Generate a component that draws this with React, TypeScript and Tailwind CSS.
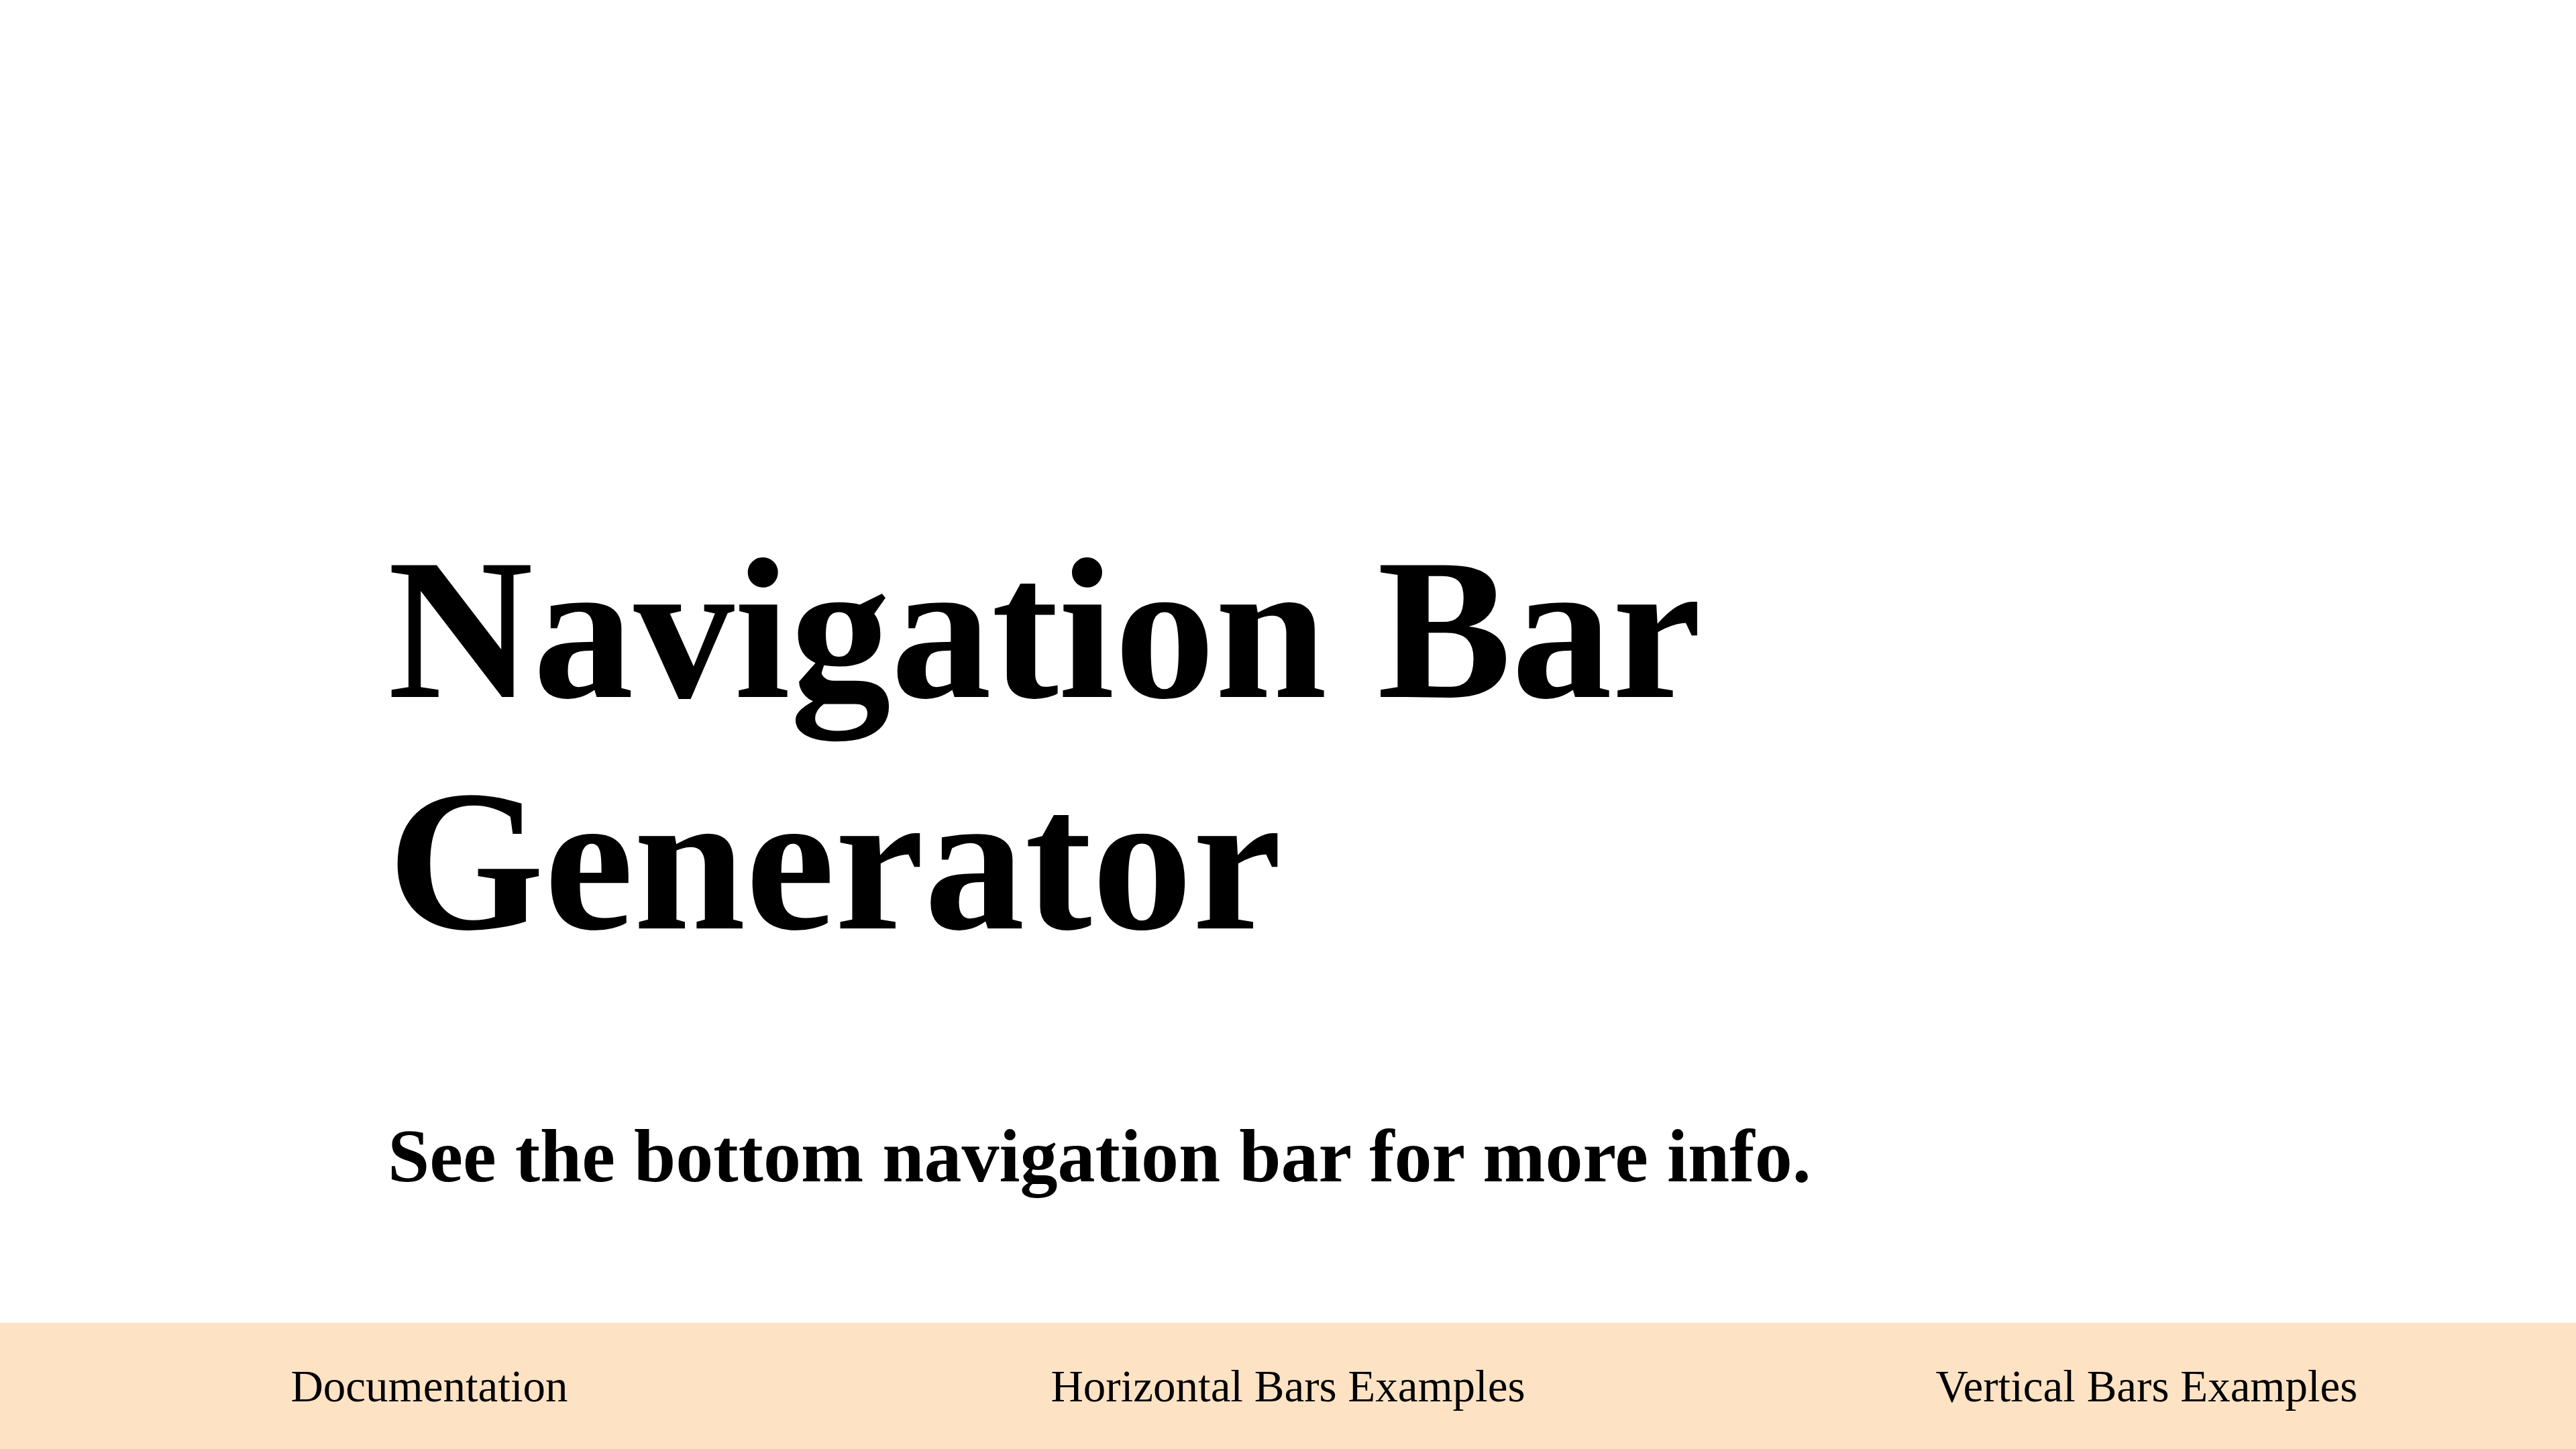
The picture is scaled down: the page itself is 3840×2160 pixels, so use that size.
const navLinks = ["Documentation", "Horizontal Bars Examples", "Vertical Bars Examples"];

export default function App() {
	return (
		<div className="flex min-h-screen flex-col bg-white text-black font-['Liberation_Serif','Times_New_Roman',serif]">
			{/* Hero */}
			<main className="flex-1 px-[578px] pt-[766px]">
				<h1 className="text-[300px] font-bold leading-[345px]">Navigation Bar Generator</h1>
				<h2 className="mt-[203px] text-[112px] font-bold leading-[129px]">
					See the bottom navigation bar for more info.
				</h2>
			</main>

			{/* Bottom navigation */}
			<nav className="flex h-[188px] items-center bg-[#fde3c4]">
				{navLinks.map((link) => (
					<a key={link} href="#" className="flex-1 text-center text-[67px] leading-[77px]">
						{link}
					</a>
				))}
			</nav>
		</div>
	);
}
